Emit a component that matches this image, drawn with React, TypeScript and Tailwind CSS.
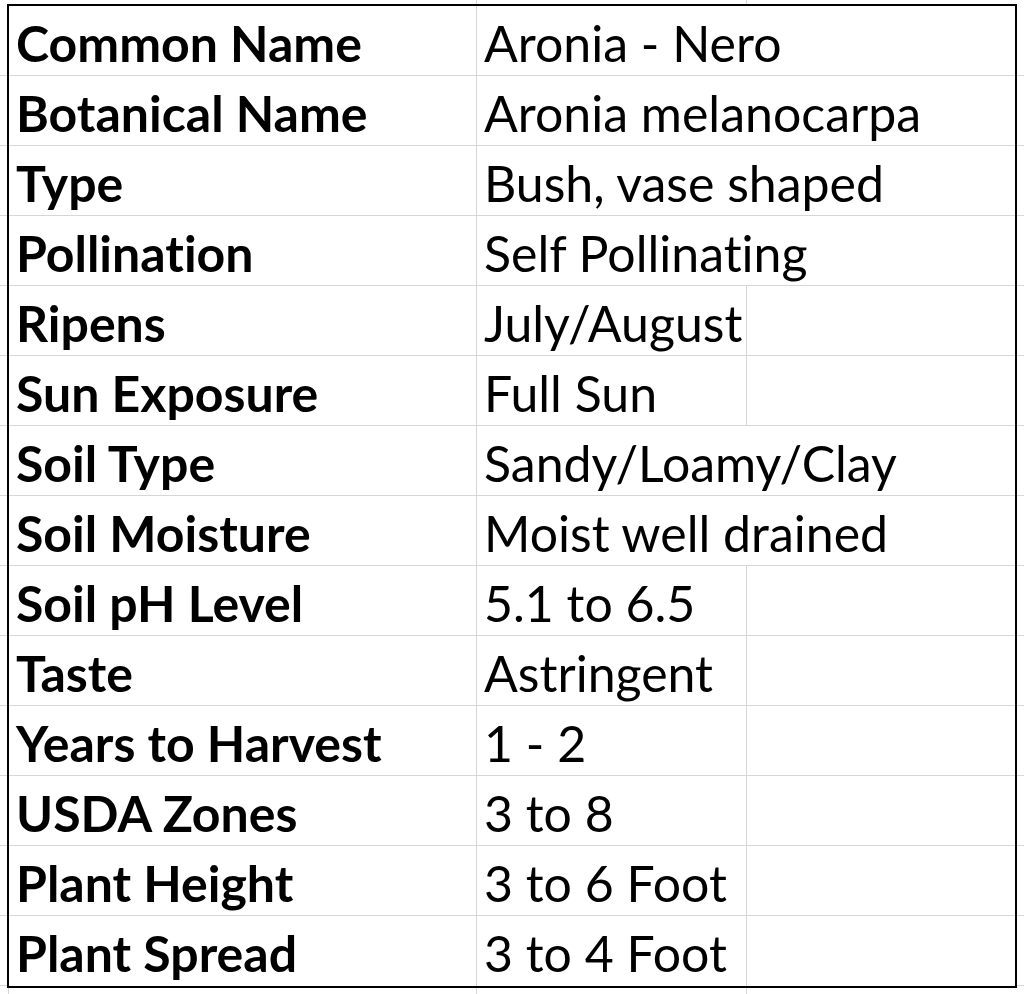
import React from 'react';

type Row = {
  label: string;
  value: string;
  wide?: boolean; // value spills over the next column, so no gridline there
};

const rows: Row[] = [
  { label: 'Common Name', value: 'Aronia - Nero', wide: true },
  { label: 'Botanical Name', value: 'Aronia melanocarpa', wide: true },
  { label: 'Type', value: 'Bush, vase shaped', wide: true },
  { label: 'Pollination', value: 'Self Pollinating', wide: true },
  { label: 'Ripens', value: 'July/August' },
  { label: 'Sun Exposure', value: 'Full Sun' },
  { label: 'Soil Type', value: 'Sandy/Loamy/Clay', wide: true },
  { label: 'Soil Moisture', value: 'Moist well drained', wide: true },
  { label: 'Soil pH Level', value: '5.1 to 6.5' },
  { label: 'Taste', value: 'Astringent' },
  { label: 'Years to Harvest', value: '1 - 2' },
  { label: 'USDA Zones', value: '3 to 8' },
  { label: 'Plant Height', value: '3 to 6 Foot' },
  { label: 'Plant Spread', value: '3 to 4 Foot' },
];

const font = { fontFamily: 'Lato, "Open Sans", sans-serif' };

const App = () => {
  return (
    <div
      className="w-[1024px] h-[994px] bg-white overflow-hidden text-black [font-variant-ligatures:none]"
      style={font}
    >
      {/* column heads peeking above the sheet border */}
      <div className="flex h-[4px]">
        <div className="w-[477px] border-r border-[#d6d6d6]" />
        <div className="w-[270px] border-r border-[#d6d6d6]" />
      </div>

      <div className="flex">
        <div className="w-[7px] pt-[2px]">
          {rows.map((r, i) => (
            <div key={i} className="h-[70px] border-b border-[#d6d6d6]" />
          ))}
        </div>

        <div className="w-[1010px] border-2 border-black">
          {rows.map((r, i) => (
            <div
              key={r.label}
              className={`flex h-[70px] ${i < rows.length - 1 ? 'border-b border-[#d6d6d6]' : ''}`}
            >
              <div className="w-[468px] border-r border-[#d6d6d6] pl-[7px] flex items-center pt-[4px] text-[50px] font-bold leading-none whitespace-nowrap">
                {r.label}
              </div>
              {r.wide ? (
                <div className="w-[538px] pl-[7px] flex items-center pt-[4px] text-[50px] leading-none whitespace-nowrap">
                  {r.value}
                </div>
              ) : (
                <>
                  <div className="w-[270px] border-r border-[#d6d6d6] pl-[7px] flex items-center pt-[4px] text-[50px] leading-none whitespace-nowrap">
                    {r.value}
                  </div>
                  <div className="w-[268px]" />
                </>
              )}
            </div>
          ))}
        </div>

        <div className="flex-1 pt-[2px]">
          {rows.map((r, i) => (
            <div key={i} className="h-[70px] border-b border-[#d6d6d6]" />
          ))}
        </div>
      </div>

      <div className="flex h-[6px]">
        <div className="w-[9px] border-r border-[#d6d6d6]" />
        <div className="w-[468px] border-r border-[#d6d6d6]" />
        <div className="w-[270px] border-r border-[#d6d6d6]" />
      </div>
    </div>
  );
};

export default App;
